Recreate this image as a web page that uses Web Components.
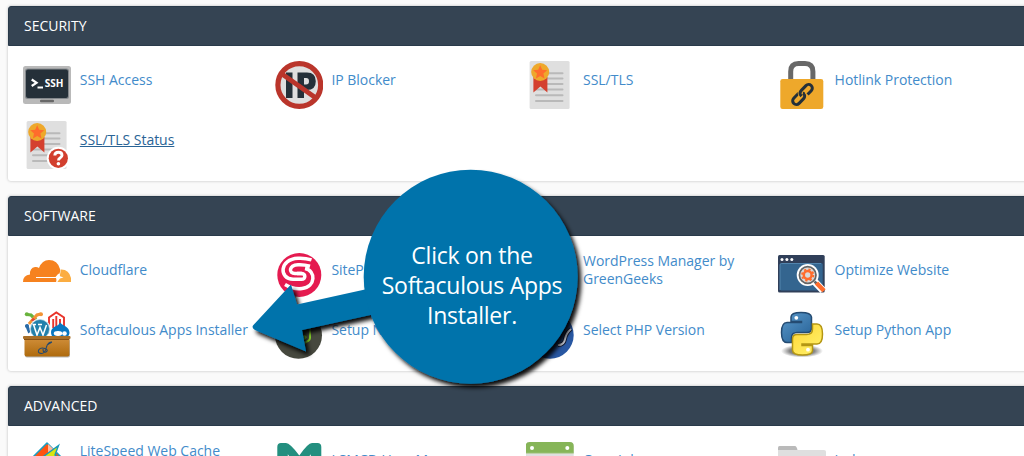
<!DOCTYPE html>
<html lang="en">
<head>
<meta charset="utf-8">
<title>Tools</title>
<style>
    html, body {
        margin: 0;
        height: 100%;
        overflow: hidden;
    }
    body {
        background: #fafafa;
        font: 14px/18px "Open Sans", "Noto Sans", sans-serif;
    }
</style>
</head>
<body>

<template id="tool-page">
    <style>
        :host {
            display: block;
            position: relative;
            height: 456px;
            overflow: hidden;
        }
        .panels {
            display: flex;
            flex-direction: column;
            gap: 15px;
            width: 1037px;
            padding: 6px 0 0 8px;
        }
    </style>
    <div class="panels"><slot></slot></div>
    <slot name="overlay"></slot>
</template>

<template id="tool-panel">
    <style>
        :host {
            display: block;
            border-radius: 3px;
            background: #fff;
            box-shadow: 0 0 3px rgba(0, 0, 0, .25);
        }
        header {
            box-sizing: border-box;
            height: 40px;
            padding: 10px 15px 10px;
            border: 1px solid #293a4a;
            border-radius: 3px 3px 0 0;
            background: #354453;
            color: #fff;
        }
        .grid {
            display: grid;
            grid-template-columns: repeat(4, 251.6px);
            row-gap: 12px;
            padding: 15px 15px 12px;
        }
    </style>
    <header></header>
    <div class="grid"><slot></slot></div>
</template>

<template id="tool-item">
    <style>
        :host {
            display: flex;
            gap: 8.800px;
            height: 48px;
        }
        .icon {
            flex: none;
            width: 48px;
            height: 48px;
        }
        a {
            display: flex;
            align-items: center;
            height: 38px;
            max-width: 176px;
            color: #428bca;
            letter-spacing: -.02px;
        }
        :host([active]) a {
            color: #2a6496;
            text-decoration: underline;
        }
    </style>
    <div class="icon"><slot name="icon"></slot></div>
    <a><span><slot></slot></span></a>
</template>

<template id="certificate-icon">
    <style>
        :host { display: block; width: 48px; height: 48px; }
        svg { display: block; }
        .badge { display: none; }
        :host([unknown]) .badge { display: inline; }
    </style>
    <svg width="48" height="48" viewBox="0 0 48 48">
        <rect x="3.6" width="40" height="48" rx="1.5" fill="#dfdfdf"/>
        <path d="M16 12.2H36.5M16 17.6H36.5M10 23H36.5M10 28.6H36.5M10 34.2H36.5M10 40H36.5" stroke="#b9b9b9" stroke-width="2" stroke-linecap="round"/>
        <path d="M7.4 16H21.4V31.4L14.4 25.4 7.4 31.4Z" fill="#d4402f"/>
        <circle cx="14.2" cy="11" r="9" fill="#eea82b"/>
        <path d="M14.2 4.2l2 4.6 5 .5-3.8 3.3 1.1 4.9-4.3-2.6-4.3 2.6 1.1-4.9-3.8-3.3 5-.5z" fill="#ff6c2c"/>
        <g class="badge">
            <circle cx="35.3" cy="37.3" r="11.5" fill="#fff"/>
            <circle cx="35.3" cy="37.3" r="9.6" fill="#d23f2e"/>
            <path d="M31.800 34.6q0-3.300 3.700-3.300 3.500 0 3.500 3 0 1.6-1.9 2.6-1.600.9-1.600 2.500" fill="none" stroke="#fff" stroke-width="2.900"/>
            <circle cx="35.4" cy="42.7" r="1.8" fill="#fff"/>
        </g>
    </svg>
</template>

<template id="call-out">
    <style>
        :host {
            position: absolute;
            left: 240px;
            top: 160px;
            width: 360px;
            height: 240px;
        }
        svg { display: block; }
        p {
            position: absolute;
            left: 123px;
            top: 80px;
            width: 218px;
            margin: 0;
            color: #fff;
            font: 23px/30px "Open Sans", "Noto Sans", sans-serif;
            letter-spacing: -.25px;
            text-align: center;
            white-space: nowrap;
        }
    </style>
    <svg width="360" height="240" viewBox="0 0 360 240">
        <defs>
            <filter id="shade" x="-10%" y="-10%" width="125%" height="125%">
                <feDropShadow dx="3.5" dy="4" stdDeviation="2.3" flood-color="#000" flood-opacity=".95"/>
            </filter>
        </defs>
        <g fill="#0073ab" filter="url(#shade)">
            <path d="M13 165.5Q11.500 168 15 170L66 191.500 62 170 135 154 150 120 125 129.500 57 144.500 51 124.500Z"/>
            <circle cx="230.700" cy="116.700" r="107"/>
        </g>
    </svg>
    <p><slot></slot></p>
</template>

<tool-page>
    <tool-panel heading="SECURITY">
        <tool-item>
            <svg slot="icon" width="48" height="48" viewBox="0 0 48 48">
                <rect y="5" width="48" height="38" rx="2.5" fill="#b9b9b9"/>
                <rect x="2" y="7.500" width="44" height="30.500" rx="2.500" fill="#85898d"/>
                <rect x="3" y="8.500" width="42" height="28.500" rx="2" fill="#253039"/>
                <rect x="17" y="38.700" width="14" height="2.600" rx="1" fill="#686868"/>
                <path d="M8.700 18.500L13.500 21.800 8.700 25M14.500 26.500H20" fill="none" stroke="#fff" stroke-width="2.200"/>
                <text x="21.800" y="26" textLength="18.700" lengthAdjust="spacingAndGlyphs" font-family="Open Sans" font-size="11" font-weight="700" fill="#fff">SSH</text>
            </svg>
            SSH Access
        </tool-item>
        <tool-item>
            <svg slot="icon" width="48" height="48" viewBox="0 0 48 48">
                <circle cx="24.300" cy="24" r="21.500" fill="#dfdfdf"/>
                <path d="M11 11.500H17.500V37H11ZM22.500 11.500H32q8.800 0 8.800 8.700t-8.800 8.800H29V37H22.500ZM29 17V23.500H31q3 0 3-3.300t-3-3.200Z" fill="#253039" fill-rule="evenodd"/>
                <path d="M7 13L39.500 36" stroke="#ba352b" stroke-width="4.600"/>
                <circle cx="24.300" cy="24" r="21.400" fill="none" stroke="#ba352b" stroke-width="5.200"/>
            </svg>
            IP Blocker
        </tool-item>
        <tool-item>
            <certificate-icon slot="icon"></certificate-icon>
            SSL/TLS
        </tool-item>
        <tool-item>
            <svg slot="icon" width="48" height="48" viewBox="0 0 48 48">
                <path d="M12.700 20V10.500Q12.700 2.500 20.500 2.500H27Q34.900 2.500 34.900 10.500V20" fill="none" stroke="#686868" stroke-width="5"/>
                <rect x="2.300" y="18" width="43" height="30" rx="2.300" fill="#eea82b"/>
                <g transform="translate(24.500 33.500) rotate(-46)" fill="none" stroke="#253039" stroke-width="3">
                    <rect x="-12.500" y="-3.700" width="14" height="7.400" rx="3.700"/>
                    <path d="M-1.500 -1Q-.5 -3.700 2.200 -3.700H8.800a3.700 3.700 0 0 1 0 7.400H2.500" stroke="#eea82b" stroke-width="5"/>
                    <path d="M-2 .5Q-2-3.700 2.200-3.700H8.800a3.700 3.700 0 0 1 0 7.400H3.500"/>
                </g>
            </svg>
            Hotlink Protection
        </tool-item>
        <tool-item active>
            <certificate-icon slot="icon" unknown></certificate-icon>
            SSL/TLS Status
        </tool-item>
    </tool-panel>

    <tool-panel heading="SOFTWARE">
        <tool-item>
            <svg slot="icon" width="48" height="48" viewBox="0 0 48 48">
                <path d="M0 31Q0 24 7 23.500 6.500 17 12 16 14 15.500 16 17 19 9 26 9 34.500 9 37 18L37 21 33 31Z" fill="#f6821f"/>
                <path d="M34 31Q38 24 37.500 18.500 46 18 48 27V31Z" fill="#fbad41"/>
                <path d="M13 26H32.500L35.500 22.500 37 25.200 40.500 26.500 37 27.600 34 31.200 33 27H13Z" fill="#fff"/>
            </svg>
            Cloudflare
        </tool-item>
        <tool-item>
            <svg slot="icon" width="48" height="48" viewBox="0 0 48 48">
                <circle cx="24.300" cy="24" r="22" fill="#e51b50"/>
                <path d="M36.500 8.800Q30 6.800 23 7.200C4 8 4 28 18 28.300H26.500C31 28.300 31 22.500 26 22.500H22" fill="none" stroke="#fff" stroke-width="3.500"/>
                <path d="M35 15.200Q29 13.500 23 13.800C13.500 14.500 13.500 22.500 20 22.500H27M10 33.500Q18 38.500 27 37.500C41 36 41 19.500 30 17.500" fill="none" stroke="#fff" stroke-width="3.500"/>
            </svg>
            SitePad Website Builder
        </tool-item>
        <tool-item>
            <svg slot="icon" width="48" height="48" viewBox="0 0 48 48">
                <circle cx="24" cy="24" r="21" fill="#21759b"/>
                <path d="M10 15L18 36 24 21 30 36 37 15" fill="none" stroke="#fff" stroke-width="4"/>
            </svg>
            WordPress Manager by GreenGeeks
        </tool-item>
        <tool-item>
            <svg slot="icon" width="48" height="48" viewBox="0 0 48 48">
                <rect y="4" width="46.700" height="37.500" rx="1.500" fill="#303f59"/>
                <rect x="2" y="12" width="42.700" height="27.500" rx="1.500" fill="#34658f"/>
                <path d="M2 39V14q0-1.500 1.500-1.500H43" fill="none" stroke="#5285ae"/>
                <circle cx="4" cy="8.500" r="1.500" fill="#fff"/><circle cx="8.900" cy="8.500" r="1.500" fill="#fff"/><circle cx="13.800" cy="8.500" r="1.500" fill="#fff"/>
                <path d="M36 30L45 39.500" stroke="#fff" stroke-width="7"/>
                <circle cx="29.700" cy="24" r="11" fill="#fff"/>
                <circle cx="29.700" cy="24" r="8.300" fill="#d9d9d9" stroke="#656565" stroke-width="1.700"/>
                <circle cx="29.700" cy="24" r="5.600" fill="none" stroke="#ff6c2c" stroke-width="2" stroke-dasharray="2.200 2.200"/>
                <circle cx="29.700" cy="24" r="3.900" fill="none" stroke="#ff6c2c" stroke-width="2.500"/>
                <path d="M36.500 30.500L38.500 32.500" stroke="#656565" stroke-width="2.500"/>
                <path d="M38.500 32L46 39.700" stroke="#ff6c2c" stroke-width="4.500"/>
            </svg>
            Optimize Website
        </tool-item>
        <tool-item>
            <svg slot="icon" width="48" height="48" viewBox="0 0 48 48">
                <defs>
                    <linearGradient id="box" x2="0" y2="1"><stop stop-color="#d2903c"/><stop offset="1" stop-color="#ae6a0d"/></linearGradient>
                </defs>
                <g fill="none" stroke-width="3.200">
                    <path d="M4 3.500L8 4 16 12" stroke="#69b33d"/>
                    <path d="M18 3L14 4 6 13" stroke="#f29435"/>
                    <path d="M3.500 14L6 20 10 17" stroke="#2a6ba7"/>
                    <path d="M9 8L14 12" stroke="#e34733"/>
                </g>
                <circle cx="3.800" cy="3.300" r="2" fill="#69b33d"/>
                <circle cx="18" cy="3.300" r="2" fill="#f29435"/>
                <circle cx="4" cy="15" r="2" fill="#2a6ba7"/>
                <path d="M26 18V6.500L33.300 1.500 41 6.500V18M30.200 17V8M33.300 5V16M37 17V8" fill="none" stroke="#e9342b" stroke-width="1.900"/>
                <circle cx="17" cy="18" r="10.500" fill="#fff"/>
                <circle cx="17" cy="18" r="9.500" fill="#2280ab" stroke="#b7d4e3" stroke-width=".7"/>
                <path d="M10.500 13.500L14 24 17 16.500 20 24 23.500 14M9.500 13.500H13M15 13.500H19" fill="none" stroke="#fff" stroke-width="1.500"/>
                <path d="M37 11.500Q39 13.500 42 15 46.500 17.500 46.500 22 46 26 42 27H31Q28 25 28 21 28 17.500 33 15 36 14 37 11.500" fill="#0877c1"/>
                <ellipse cx="35" cy="22.500" rx="4.200" ry="2.400" fill="#fff"/><circle cx="41.500" cy="22.500" r="2.300" fill="#fff"/>
                <rect x="2" y="28" width="45" height="18.500" rx="2" fill="#888" opacity=".6"/>
                <rect x="1.500" y="26" width="45" height="19.500" rx="2" fill="url(#box)"/>
                <rect y="25" width="47.500" height="3" rx="1" fill="#a86f28"/>
                <path d="M1 28.500H46" stroke="#875114"/>
                <path d="M29 31Q25 31 23.500 36 22 43 18 42.500 14 42 16 38.500 18 36 22 37.500 26 39 23 41 20 42 20 38M29 31L24 34" fill="none" stroke="#24496f" stroke-width="1.100"/>
            </svg>
            Softaculous Apps Installer
        </tool-item>
        <tool-item>
            <svg slot="icon" width="48" height="48" viewBox="0 0 48 48">
                <circle cx="23.500" cy="24.300" r="23.500" fill="#46483e"/>
                <path d="M35 16V27Q35 29 33 30L24 35 13 29V17L23 11M29 18Q25 18 25 21T29 25 27 29" fill="none" stroke="#83cd29" stroke-width="2"/>
            </svg>
            Setup Node.js App
        </tool-item>
        <tool-item>
            <svg slot="icon" width="48" height="48" viewBox="0 0 48 48">
                <circle cx="24" cy="24" r="23.700" fill="#2857a2"/>
                <path d="M5 36L9 18H15Q21 18 19 25 18 29 9 29M19 30L23 12M22 19Q28 16 27 22L25 30M32 34Q38 34 39 28T45 18" fill="none" stroke="#151c31" stroke-width="4"/>
                <path d="M5 36L9 18H15Q21 18 19 25 18 29 9 29M19 30L23 12M22 19Q28 16 27 22L25 30M32 34Q38 34 39 28T45 18" fill="none" stroke="#dce1ed" stroke-width="2"/>
            </svg>
            Select PHP Version
        </tool-item>
        <tool-item>
            <svg slot="icon" width="48" height="48" viewBox="0 0 48 48">
                <defs>
                    <radialGradient id="ground"><stop stop-color="#555"/><stop offset=".6" stop-color="#888"/><stop offset="1" stop-color="#999" stop-opacity="0"/></radialGradient>
                    <linearGradient id="blue" x2=".8" y2="1"><stop stop-color="#5c9acb"/><stop offset="1" stop-color="#286398"/></linearGradient>
                    <linearGradient id="yellow" x2=".8" y2="1"><stop stop-color="#ffd633"/><stop offset="1" stop-color="#fff06a"/></linearGradient>
                </defs>
                <ellipse cx="24" cy="40" rx="21" ry="6.500" fill="url(#ground)"/>
                <path d="M13 11V6Q13 1.500 23 1.500T33.500 6V17Q33.500 21.500 29 21.500H19Q13.500 21.500 13.500 27V31.500H9Q3.500 31.500 3.500 21.500T9 11.500H23.500V10.500H13Z" fill="url(#blue)" stroke="#244b72" stroke-width="1.500"/>
                <circle cx="18.300" cy="6.800" r="1.900" fill="#fff"/>
                <path d="M34.500 13H39Q44.500 13 44.500 23T39 33H24V34.500H34.500V39.500Q34.500 44 24.500 44T14.500 39V28Q14.500 23.500 19 23.500H28.500Q34.500 23.500 34.500 18Z" fill="url(#yellow)" stroke="#b49613" stroke-width="1.500"/>
                <circle cx="30" cy="38.700" r="1.900" fill="#fff"/>
            </svg>
            Setup Python App
        </tool-item>
    </tool-panel>

    <tool-panel heading="ADVANCED">
        <tool-item>
            <svg slot="icon" width="48" height="48" viewBox="0 0 48 48">
                <path d="M24 2L46 24 24 46 2 24Z" fill="#ff5310" stroke="#169fc5" stroke-width="1.500" stroke-linejoin="round"/>
                <path d="M25 3L34 11.500 25 14.500Z" fill="#ffb79b"/>
                <path d="M35.500 4.500L15 19.500 23 23 14 35 38 18 32 14Z" fill="#d9e510" stroke="#1798b9" stroke-width="1.400"/>
            </svg>
            LiteSpeed Web Cache Manager
        </tool-item>
        <tool-item>
            <svg slot="icon" width="48" height="48" viewBox="0 0 48 48">
                <path d="M2.300 46V6Q2.300 2 6 2H11Q15 2 24.300 14.500 33 2 37 2H42.500Q46.300 2 46.300 6V46Z" fill="#238f7f"/>
                <path d="M12.800 13.300L24.300 28 35.800 13.300V36H12.800Z" fill="#fff"/>
            </svg>
            LSMCD User Manager
        </tool-item>
        <tool-item>
            <svg slot="icon" width="48" height="48" viewBox="0 0 48 48">
                <rect x="-.3" y="1" width="48" height="46" rx="4" fill="#dfdfdf"/>
                <path d="M-.3 12V5Q-.3 1 3.700 1H43.700Q47.700 1 47.700 5V12Z" fill="#86b558"/>
                <path d="M0 12.300H47.700" stroke="#b5cf9b"/>
                <circle cx="6" cy="7" r="2" fill="#fff"/><circle cx="41.300" cy="7" r="2" fill="#fff"/>
            </svg>
            Cron Jobs
        </tool-item>
        <tool-item>
            <svg slot="icon" width="48" height="48" viewBox="0 0 48 48">
                <path d="M0 12V6.500Q0 5 1.500 5H17Q18.500 5 19.500 9V12Z" fill="#bababa"/>
                <path d="M0 9H46Q48 9 48 10.500V44H0Z" fill="#dfdfdf"/>
            </svg>
            Indexes
        </tool-item>
    </tool-panel>

    <call-out slot="overlay">Click on the<br>Softaculous Apps<br>Installer.</call-out>
</tool-page>

<script>

    class TemplateElement extends HTMLElement {

        constructor() {
            super();

            let template = document.getElementById(this.localName);
            let shadowRoot = this.attachShadow({mode: 'open'});
            shadowRoot.appendChild(template.content.cloneNode(true));
        }

    }

    window.customElements.define('tool-page', class extends TemplateElement {});
    window.customElements.define('tool-item', class extends TemplateElement {});
    window.customElements.define('certificate-icon', class extends TemplateElement {});
    window.customElements.define('call-out', class extends TemplateElement {});

    window.customElements.define('tool-panel', class extends TemplateElement {

        static get observedAttributes() { return ["heading"]; }

        attributeChangedCallback(name, oldValue, newValue) {
            this.shadowRoot.querySelector('header').textContent = newValue;
        }

    });

</script>
</body>
</html>
